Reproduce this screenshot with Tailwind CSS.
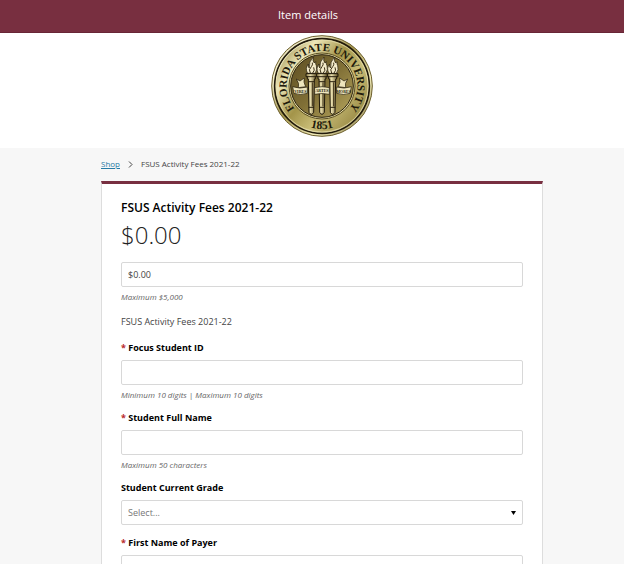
<!DOCTYPE html>
<html lang="en">

<head>
    <meta charset="UTF-8">
    <meta name="viewport" content="width=device-width, initial-scale=1">
    <title>Item details</title>
    <script src="https://cdn.jsdelivr.net/npm/@tailwindcss/browser@4"></script>
</head>

<body class="min-h-screen bg-[#f7f7f7] font-['Open_Sans',sans-serif] text-[10px] text-[#444]">
    <header class="bg-[#782f40] border-b border-[#682636] pr-2 pt-[5px] pb-[7px]">
        <h1 class="text-center text-[11px] leading-5 text-white">Item details</h1>
    </header>
    <!-- Logo -->
    <div class="bg-white flex justify-center pl-5 pt-[2px] pb-[11px]">
        <svg class="w-[102px] h-[102px]" viewBox="0 0 306 306" role="img" aria-label="Florida State University seal">
            <defs>
                <linearGradient id="rim" x1="0" y1="0" x2="1" y2="1">
                    <stop offset="0" stop-color="#a79c62" />
                    <stop offset=".2" stop-color="#fbf7d8" />
                    <stop offset=".45" stop-color="#a3954d" />
                    <stop offset=".7" stop-color="#f1ebb9" />
                    <stop offset="1" stop-color="#6b5c22" />
                </linearGradient>
                <linearGradient id="band" x1="0" y1=".1" x2="1" y2=".9">
                    <stop offset="0" stop-color="#8f8344" />
                    <stop offset=".22" stop-color="#eee7b8" />
                    <stop offset=".45" stop-color="#a39449" />
                    <stop offset=".65" stop-color="#c9bd78" />
                    <stop offset="1" stop-color="#8d7d38" />
                </linearGradient>
                <linearGradient id="disc" x1="0" y1="0" x2="1" y2="1">
                    <stop offset="0" stop-color="#5d4e22" />
                    <stop offset=".5" stop-color="#806f36" />
                    <stop offset="1" stop-color="#b6a65e" />
                </linearGradient>
                <linearGradient id="post" x1="0" y1="0" x2="1" y2="0">
                    <stop offset="0" stop-color="#857540" />
                    <stop offset=".4" stop-color="#e9dfae" />
                    <stop offset="1" stop-color="#5c4c20" />
                </linearGradient>
                <path id="nameArc" d="M65 213 A106 106 0 1 1 241 213" />
                <path id="yearArc" d="M70 252 A129 129 0 0 0 236 252" />
                <g id="torch">
                    <path d="M-11 115 Q-20 100-9 87 Q-11 97-6 99 Q-9 80 6 66 Q3 78 9 84 L13 80 Q12 87 15 92 Q19 104 11 115 Z" fill="#f4eccb" stroke="#211a0b" stroke-width="2" />
                    <path d="M-3 114 Q-10 104 0 95 Q5 90 3 83 M4 114 Q12 106 7 97" fill="none" stroke="#3b2f15" stroke-width="3" />
                    <path d="M-16 116 H16 V125 H12 V132 H9 L7 232 Q0 244-7 232 L-9 132 H-12 V125 H-16 Z" fill="url(#post)" stroke="#211a0b" stroke-width="3" />
                    <path d="M-14 125 H14 M-9 140 H9 M-8 217 H8" stroke="#2c2310" stroke-width="3" />
                    <path d="M3 142 V214" stroke="#3d3015" stroke-width="3" />
                </g>
            </defs>
            <circle cx="153" cy="153" r="151" fill="url(#rim)" stroke="#6e6130" stroke-width="3" />
            <circle cx="153" cy="153" r="142" fill="none" stroke="#211a0b" stroke-width="5" />
            <circle cx="153" cy="153" r="138" fill="url(#band)" stroke="#e7dfae" stroke-width="2" />
            <circle cx="153" cy="153" r="99" fill="#e2d9a2" stroke="#5d5024" stroke-width="3" />
            <circle cx="153" cy="153" r="94" fill="url(#disc)" stroke="#2c2310" stroke-width="3" />
            <use href="#torch" x="121" />
            <use href="#torch" x="185" />
            <use href="#torch" x="153" />
            <!-- Ribbon -->
            <g fill="#eee6bd" stroke="#211a0b" stroke-width="2">
                <path d="M76 132 L87 138 L100 129 Q96 141 104 155 L82 158 Q86 145 76 132 Z" />
                <path d="M230 132 L219 138 L206 129 Q210 141 202 155 L224 158 Q220 145 230 132 Z" />
                <path d="M65 155 Q86 163 109 156 V175 Q88 182 69 175 Z" />
                <path d="M131 158 Q153 152 175 158 V178 Q153 173 131 178 Z" />
                <path d="M241 155 Q220 163 197 156 V175 Q218 182 237 175 Z" />
            </g>
            <g class="font-['Liberation_Serif',serif] font-bold" fill="#211a0b" text-anchor="middle">
                <text font-size="12" x="88" y="173">VIRES</text>
                <text font-size="12" x="153" y="170">ARTES</text>
                <text font-size="12" x="218" y="173">MORES</text>
                <text font-size="33"><textPath href="#nameArc" startOffset="50%">FLORIDA STATE UNIVERSITY</textPath></text>
                <text font-size="35"><textPath href="#yearArc" startOffset="50%">1851</textPath></text>
            </g>
        </svg>
    </div>

    <main class="pl-[101px] pr-[81px]">
        <nav aria-label="Breadcrumb" class="flex items-center gap-2 pt-2 pb-[9px] text-[8px] leading-4">
            <a href="#" class="text-[#277ba5] underline">Shop</a>
            <svg class="w-[5px] h-[7px]" viewBox="0 0 5 7" fill="none" stroke="#444"><path d="M1 0.5 L4 3.5 L1 6.5" /></svg>
            <span>FSUS Activity Fees 2021-22</span>
        </nav>
        <!-- Item card -->
        <form class="bg-white border-x border-[#ddd] border-t-3 border-t-[#782f40] px-[19px] pt-4 pb-4">
            <h2 class="text-[12px] leading-4 font-semibold text-black">FSUS Activity Fees 2021-22</h2>
            <p class="mt-[3px] text-[24px] leading-8 font-light text-[#222]">$0.00</p>
            <input type="text" value="$0.00" aria-label="Amount" class="block w-full h-[25px] mt-[11px] px-[6px] border border-[#d8d8d8] rounded-xs text-[9px]">
            <p class="mt-1 text-[8px] leading-[11px] italic text-[#666]">Maximum $5,000</p>
            <p class="mt-3 text-[9px] leading-4">FSUS Activity Fees 2021-22</p>

            <div class="mt-[10px] space-y-[10px]">
                <div>
                    <label for="studentId" class="block text-[9px] leading-4 font-bold text-black"><span class="text-[#b8292f]">*</span> Focus Student ID</label>
                    <input id="studentId" type="text" class="block w-full h-[25px] mt-1 px-[6px] border border-[#d8d8d8] rounded-xs text-[9px]">
                    <p class="mt-1 text-[8px] leading-[11px] italic text-[#666]">Minimum 10 digits | Maximum 10 digits</p>
                </div>
                <div>
                    <label for="studentName" class="block text-[9px] leading-4 font-bold text-black"><span class="text-[#b8292f]">*</span> Student Full Name</label>
                    <input id="studentName" type="text" class="block w-full h-[25px] mt-1 px-[6px] border border-[#d8d8d8] rounded-xs text-[9px]">
                    <p class="mt-1 text-[8px] leading-[11px] italic text-[#666]">Maximum 50 characters</p>
                </div>
                <div>
                    <label for="grade" class="block text-[9px] leading-4 font-bold text-black">Student Current Grade</label>
                    <div class="relative mt-1">
                        <select id="grade" class="block w-full h-[25px] px-[6px] border border-[#d8d8d8] rounded-xs appearance-none text-[9px] text-[#777]">
                            <option>Select...</option>
                        </select>
                        <svg class="absolute right-[7px] top-[11px] w-[5px] h-1 pointer-events-none" viewBox="0 0 5 4"><path d="M0 0 H5 L2.5 4 Z" /></svg>
                    </div>
                </div>
                <div>
                    <label for="firstName" class="block text-[9px] leading-4 font-bold text-black"><span class="text-[#b8292f]">*</span> First Name of Payer</label>
                    <input id="firstName" type="text" class="block w-full h-[25px] mt-1 px-[6px] border border-[#d8d8d8] rounded-xs text-[9px]">
                </div>
            </div>
        </form>
    </main>
</body>

</html>
